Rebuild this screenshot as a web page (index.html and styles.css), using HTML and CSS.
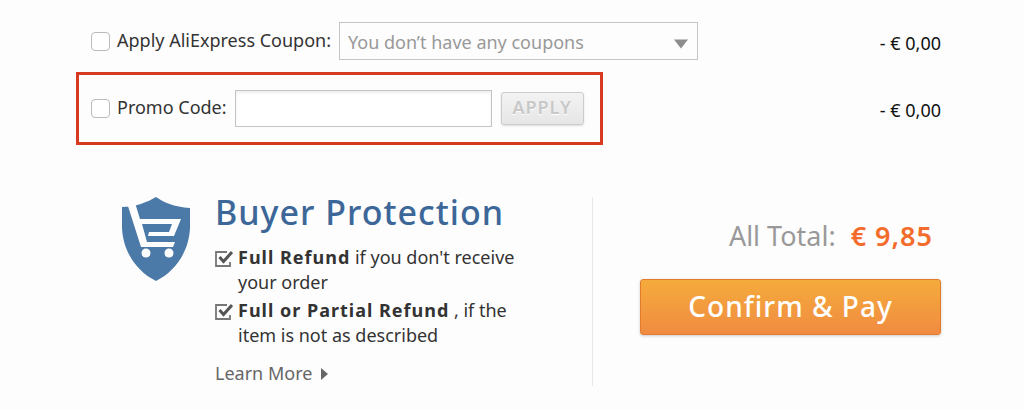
FILE: index.html
```
<!DOCTYPE html>
<html lang="en">
<head>
    <meta charset="UTF-8">
    <meta name="viewport" content="width=device-width, initial-scale=1.0">
    <title>Confirm Order</title>
    <link rel="stylesheet" href="styles.css">
</head>
<body>
    <main class="checkout">
        <div class="row">
            <div class="field">
                <input type="checkbox" id="useCoupon">
                <label for="useCoupon">Apply AliExpress Coupon:</label>
                <div class="select-wrap">
                    <select class="coupon-select" aria-label="Coupon">
                        <option>You don’t have any coupons</option>
                    </select>
                    <svg class="arrow" viewBox="0 0 16 10" aria-hidden="true"><path d="M1 0.5h14L8 9.5z" fill="#8c8c8c"/></svg>
                </div>
            </div>
            <span class="amount">- € 0,00</span>
        </div>

        <div class="row promo-row">
            <div class="field promo">
                <input type="checkbox" id="usePromo">
                <label for="usePromo">Promo Code:</label>
                <input type="text" class="promo-input" aria-label="Promo code value">
                <button class="apply" type="button">APPLY</button>
            </div>
            <span class="amount">- € 0,00</span>
        </div>

        <div class="bottom">
            <section class="protection">
                <svg class="shield" viewBox="0 0 68 84" aria-hidden="true">
                    <path d="M34 0C41 5 52 10 68 11V31C67 54 54 74 34 84C14 74 1 54 0 31V10C13 10 26 5 34 0Z" fill="#4b7aa8"/>
                    <path d="M5 6L13 4L14 9L18 22H59L52 39H26L27 35H47L50 27H20L25 45H53L51 50H19Z" fill="#fdfdfd"/>
                    <circle cx="24" cy="56" r="4.5" fill="#fdfdfd"/>
                    <circle cx="47" cy="56" r="4.5" fill="#fdfdfd"/>
                </svg>
                <div class="protection-text">
                    <h2>Buyer Protection</h2>
                    <ul>
                        <li>
                            <svg class="tick" viewBox="0 0 18 16" aria-hidden="true"><path d="M12 1H1V15H15V11" fill="none" stroke="#777" stroke-width="1.8"/><path d="M4.5 6L8.5 10.5L17 1" fill="none" stroke="#555" stroke-width="3"/></svg>
                            <span><strong>Full Refund</strong> if you don't receive your order</span>
                        </li>
                        <li>
                            <svg class="tick" viewBox="0 0 18 16" aria-hidden="true"><path d="M12 1H1V15H15V11" fill="none" stroke="#777" stroke-width="1.8"/><path d="M4.5 6L8.5 10.5L17 1" fill="none" stroke="#555" stroke-width="3"/></svg>
                            <span><strong>Full or Partial Refund</strong> , if the item is not as described</span>
                        </li>
                    </ul>
                    <a href="#" class="more">Learn More <svg viewBox="0 0 7 12" aria-hidden="true"><path d="M0 0L7 6L0 12z" fill="#666"/></svg></a>
                </div>
            </section>
            <section class="total">
                <p>All Total: <strong>€ 9,85</strong></p>
                <button class="confirm" type="button">Confirm &amp; Pay</button>
            </section>
        </div>
    </main>
</body>
</html>
```
FILE: styles.css
```
* {
    box-sizing: border-box;
}

body {
    margin: 0;
    background-color: #fdfdfd;
    font-family: "Noto Sans", "Open Sans", sans-serif;
    font-size: 18px;
    line-height: 25px;
    color: #333;
}

button, input, select {
    font-family: inherit;
}

.checkout {
    padding: 22px 83px 16px 76px;
}

.row {
    display: flex;
    justify-content: space-between;
    align-items: center;
}

.field {
    display: flex;
    align-items: center;
    padding-left: 15px;
}

.field label {
    margin: 0 8px 0 7px;
    padding-bottom: 2px;
    white-space: nowrap;
}

input[type="checkbox"] {
    appearance: none;
    width: 19px;
    height: 19px;
    margin: 0;
    border: 1px solid #bbb;
    border-radius: 4px;
    background-color: #fff;
}

input[type="checkbox"]:checked {
    background-color: #4b7aa8;
}

.select-wrap {
    position: relative;
}

.coupon-select {
    appearance: none;
    width: 359px;
    height: 38px;
    padding: 2px 32px 0 8px;
    border: 1px solid #c4c4c4;
    border-radius: 0;
    background-color: #fdfdfd;
    font-size: 18px;
    color: #999;
}

.arrow {
    position: absolute;
    right: 9px;
    top: 17px;
    width: 16px;
    height: 10px;
    pointer-events: none;
}

.amount {
    padding-top: 4px;
    color: #111;
}

.promo-row {
    margin-top: 12px;
}

.promo {
    height: 73px;
    padding: 0 16px 0 12px;
    border: 3px solid #d63b22;
}

.promo-input {
    width: 257px;
    height: 37px;
    padding: 0 8px;
    border: 1px solid #c4c4c4;
    background-color: #fff;
    box-shadow: inset 0 2px 3px #eee;
    font-size: 18px;
}

.apply {
    width: 83px;
    height: 33px;
    margin-left: 9px;
    padding: 0 0 3px;
    border: 1px solid #ccc;
    border-radius: 3px;
    background: linear-gradient(#f3f3f3, #e6e6e6);
    box-shadow: 0 1px 2px #ddd;
    font-size: 18px;
    font-weight: 600;
    letter-spacing: 1px;
    color: #c8c8c8;
    text-shadow: 0 1px 0 #fff;
}

.bottom {
    display: flex;
    justify-content: space-between;
    margin-top: 52px;
}

.protection {
    display: flex;
    flex: 1;
    padding-left: 46px;
    border-right: 1px solid #e8e8e8;
}

.shield {
    flex: none;
    width: 68px;
    height: 84px;
}

.protection-text {
    width: 320px;
    margin-left: 25px;
}

.protection h2 {
    margin: 0 0 17px;
    font-size: 34px;
    font-weight: 500;
    letter-spacing: 1px;
    line-height: 31px;
    color: #3c6798;
    white-space: nowrap;
}

.protection ul {
    margin: 0;
    padding: 0;
    list-style: none;
}

.protection li {
    display: flex;
    gap: 5px;
    margin-bottom: 3px;
}

.protection li strong {
    font-weight: 700;
    letter-spacing: 1px;
}

.tick {
    flex: none;
    width: 18px;
    height: 16px;
    margin-top: 6px;
}

.more {
    display: inline-block;
    margin-top: 10px;
    color: #666;
    text-decoration: none;
}

.more svg {
    width: 7px;
    height: 12px;
    margin-left: 4px;
}

.total {
    width: 301px;
    margin-left: 47px;
}

.total p {
    margin: 21px 8px 25px 0;
    font-size: 27px;
    line-height: 36px;
    color: #999;
    text-align: right;
}

.total strong {
    margin-left: 8px;
    font-weight: 600;
    letter-spacing: 1px;
    color: #f36c2b;
}

.confirm {
    width: 100%;
    height: 56px;
    padding: 0 0 3px;
    border: 1px solid #e27c2c;
    border-radius: 3px;
    background: linear-gradient(#f5ab3c, #f08b41);
    box-shadow: 0 1px 3px #ccc;
    font-size: 28px;
    font-weight: 500;
    letter-spacing: 1px;
    color: #fff;
}
```
